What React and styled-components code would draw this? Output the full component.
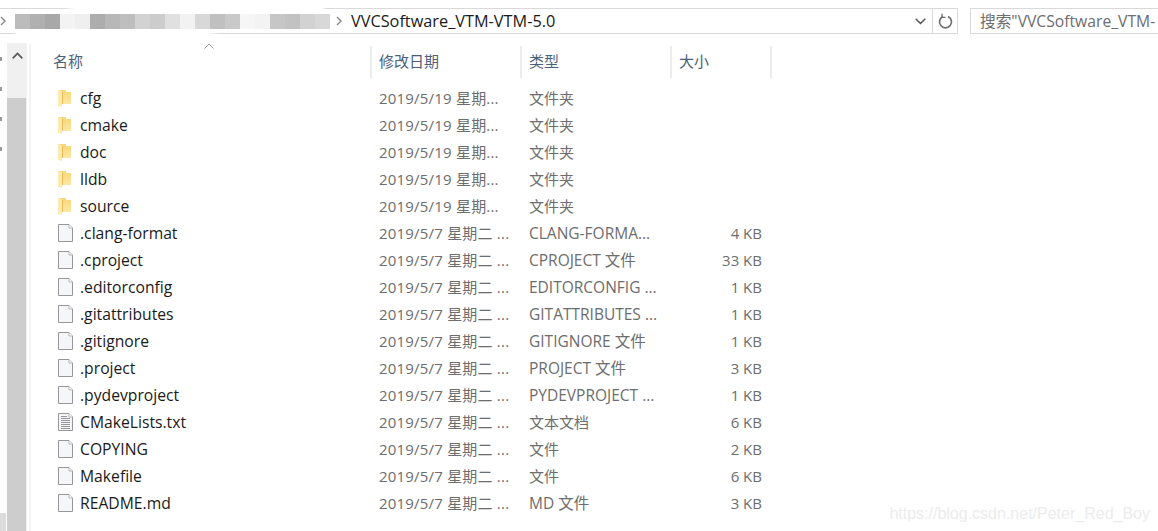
import React from 'react'
import styled, { createGlobalStyle } from 'styled-components'

const GlobalStyle = createGlobalStyle`
  html, body {
    margin: 0;
    padding: 0;
    background: #fff;
    overflow: hidden;
  }
`

const Window = styled.div`
  position: relative;
  width: 1158px;
  height: 531px;
  overflow: hidden;
  background: #fff;
  font-family: 'Open Sans', 'Noto Sans CJK SC', sans-serif;
  font-size: 15px;
`

const TopBar = styled.div`
  display: flex;
  height: 26px;
  padding-top: 8px;
`

const AddressBox = styled.div`
  position: relative;
  display: flex;
  flex: none;
  align-items: center;
  width: 958px;
  height: 26px;
  box-sizing: border-box;
  border: 1px solid #d9d9d9;
  border-left: 0;
`

const Smudge = styled.svg`
  position: absolute;
  left: 8px;
  top: -8px;
  width: 335px;
  height: 42px;
`

const Chevron = styled.svg`
  position: relative;
  flex: none;
  width: 6px;
  height: 10px;
  margin-left: ${(p) => p.$left}px;
`

const Mosaic = styled.div`
  position: relative;
  display: flex;
  margin-left: 9px;
`

const Tile = styled.div`
  width: 15px;
  height: 15px;
  background: ${(p) => p.$color};
`

const PathText = styled.span`
  position: relative;
  margin-left: 9px;
  color: #1a1a1a;
  font-size: 16.3px;
  white-space: nowrap;
`

const DropWrap = styled.div`
  margin-left: auto;
  display: flex;
  align-items: center;
  padding-right: 6px;
`

const RefreshWrap = styled.div`
  display: flex;
  align-items: center;
  justify-content: center;
  width: 24px;
  height: 100%;
  border-left: 1px solid #d9d9d9;
`

const SearchBox = styled.div`
  display: flex;
  flex: none;
  align-items: center;
  width: 188px;
  height: 26px;
  box-sizing: border-box;
  margin-left: 12px;
  padding-left: 9px;
  padding-bottom: 1px;
  border: 1px solid #d9d9d9;
  border-right: 0;
  color: #6d6d6d;
  font-size: 15.7px;
  white-space: nowrap;
  overflow: hidden;
`

const Main = styled.div`
  display: flex;
  height: 497px;
  padding-top: 9px;
`

const NavStrip = styled.div`
  display: flex;
  flex-direction: column;
  flex: none;
  width: 7px;
  padding-top: 14px;
  gap: 26px;
`

const NavDot = styled.div`
  width: 2px;
  height: 4px;
  background: #9a9a9a;
`

const NavBlock = styled.div`
  width: 6px;
  height: 27px;
  margin-top: auto;
  background: #dcdcdc;
`

const Scrollbar = styled.div`
  display: flex;
  flex-direction: column;
  flex: none;
  width: 20px;
  padding-bottom: 2px;
  background: #f0f0f0;
`

const ScrollUp = styled.div`
  display: flex;
  justify-content: center;
  height: 55px;
  padding-top: 9px;
  box-sizing: border-box;
`

const ScrollThumb = styled.div`
  flex: 1;
  margin-right: 1px;
  background: #cdcdcd;
`

const Pane = styled.div`
  flex: 1;
  margin-left: 2px;
  border-left: 2px solid #f4f4f4;
  padding-left: 21px;
`

const HeaderRow = styled.div`
  position: relative;
  display: flex;
  height: 32px;
  margin-top: 3px;
`

const SortArrow = styled.svg`
  position: absolute;
  left: 152px;
  top: -3px;
  width: 10px;
  height: 6px;
`

const HeaderCell = styled.div`
  box-sizing: border-box;
  width: ${(p) => p.$width}px;
  padding-left: ${(p) => p.$pad}px;
  line-height: 30px;
  color: #4c607a;
  font-size: 15px;
  border-right: 2px solid #ececec;
`

const Rows = styled.div`
  display: flex;
  flex-direction: column;
  margin-top: 6px;
`

const Row = styled.div`
  display: flex;
  align-items: center;
  height: 27px;
  color: #6d6d6d;
  font-size: 15px;
  white-space: nowrap;
`

const NameCell = styled.div`
  display: flex;
  align-items: center;
  width: 327px;
  padding-left: 6px;
  box-sizing: border-box;
  color: #1a1a1a;
  font-size: 15.7px;
`

const IconSlot = styled.div`
  display: flex;
  flex: none;
  width: 22px;
`

const DateCell = styled.div`
  width: 150px;
  letter-spacing: 0.2px;
`

const TypeCell = styled.div`
  width: 143px;
  font-size: ${(p) => (p.$latin ? '15.5px' : '15px')};
`

const SizeCell = styled.div`
  width: 90px;
  text-align: right;
`

const Watermark = styled.div`
  position: absolute;
  right: 8px;
  bottom: 8px;
  color: #ececec;
  font-family: 'Liberation Sans', sans-serif;
  font-size: 16px;
`

const mosaic = [
  '#bcbcbc', '#b0b0b0', '#a8a8a8', '#f3f3f3', '#efefef', '#adadad', '#b8b8b8', '#bebebe',
  '#d2d2d2', '#cccccc', '#e0e0e0', '#f2f2f2', '#d8d8d8', '#c0c0c0', '#c9c9c9', '#f6f6f6',
  '#f3f3f3', '#c6c6c6', '#c2c2c2', '#d2d2d2', '#d8d8d8',
]

const folderDate = '2019/5/19 星期...'
const fileDate = '2019/5/7 星期二 ...'

const entries = [
  { icon: 'folder', name: 'cfg', date: folderDate, type: '文件夹' },
  { icon: 'folder', name: 'cmake', date: folderDate, type: '文件夹' },
  { icon: 'folder', name: 'doc', date: folderDate, type: '文件夹' },
  { icon: 'folder', name: 'lldb', date: folderDate, type: '文件夹' },
  { icon: 'folder', name: 'source', date: folderDate, type: '文件夹' },
  { icon: 'file', name: '.clang-format', date: fileDate, type: 'CLANG-FORMA...', size: '4 KB' },
  { icon: 'file', name: '.cproject', date: fileDate, type: 'CPROJECT 文件', size: '33 KB' },
  { icon: 'file', name: '.editorconfig', date: fileDate, type: 'EDITORCONFIG ...', size: '1 KB' },
  { icon: 'file', name: '.gitattributes', date: fileDate, type: 'GITATTRIBUTES ...', size: '1 KB' },
  { icon: 'file', name: '.gitignore', date: fileDate, type: 'GITIGNORE 文件', size: '1 KB' },
  { icon: 'file', name: '.project', date: fileDate, type: 'PROJECT 文件', size: '3 KB' },
  { icon: 'file', name: '.pydevproject', date: fileDate, type: 'PYDEVPROJECT ...', size: '1 KB' },
  { icon: 'text', name: 'CMakeLists.txt', date: fileDate, type: '文本文档', size: '6 KB' },
  { icon: 'file', name: 'COPYING', date: fileDate, type: '文件', size: '2 KB' },
  { icon: 'file', name: 'Makefile', date: fileDate, type: '文件', size: '6 KB' },
  { icon: 'file', name: 'README.md', date: fileDate, type: 'MD 文件', size: '3 KB' },
]

function FolderIcon() {
  return (
    <svg width="13" height="18" viewBox="0 0 13 18">
      <defs>
        <linearGradient id="folderBody" x1="0" y1="0" x2="0" y2="1">
          <stop offset="0" stopColor="#f8d675" />
          <stop offset="1" stopColor="#fde7a6" />
        </linearGradient>
      </defs>
      <path d="M0 1H8V3H13V15H4V3Z" fill="url(#folderBody)" />
      <path d="M0 1L4 3V18L0 17Z" fill="#feeab0" />
      <path d="M4 3H5V15H4Z" fill="#e9bd55" />
    </svg>
  )
}

function FileIcon({ lines }) {
  return (
    <svg width="15" height="18" viewBox="0 0 15 18">
      <path d="M.5.5H11L14.5 4V17.5H.5Z" fill="#f4f6f9" stroke="#969696" />
      <path d="M11 .5V4H14.5" fill="#fff" stroke="#b5b5b5" />
      {lines && (
        <path d="M3 3.5H9M3 5.5H12M3 7.5H12M3 9.5H12M3 11.5H12M3 13.5H12M3 15.5H12" stroke="#969696" />
      )}
    </svg>
  )
}

function EntryIcon({ kind }) {
  if (kind === 'folder') return <FolderIcon />
  return <FileIcon lines={kind === 'text'} />
}

export default function App() {
  return (
    <Window>
      <GlobalStyle />
      <TopBar>
        <AddressBox>
          <Smudge viewBox="0 0 335 42">
            <path
              d="M6 22C6 12 40 8 90 6C170 1 300 0 326 10C335 14 330 24 300 28C240 30 190 32 170 37C110 42 20 42 8 34C5 30 5 26 6 22Z"
              fill="#fff"
            />
          </Smudge>
          <Chevron $left={0} viewBox="0 0 6 10">
            <path d="M1 1l4 4-4 4" fill="none" stroke="#8a8a8a" strokeWidth="1.4" />
          </Chevron>
          <Mosaic>
            {mosaic.map((color, i) => (
              <Tile key={i} $color={color} />
            ))}
          </Mosaic>
          <Chevron $left={6} viewBox="0 0 6 10">
            <path d="M1 1l4 4-4 4" fill="none" stroke="#8a8a8a" strokeWidth="1.4" />
          </Chevron>
          <PathText>VVCSoftware_VTM-VTM-5.0</PathText>
          <DropWrap>
            <svg width="11" height="7" viewBox="0 0 11 7">
              <path d="M.7.7l4.8 4.8L10.3.7" fill="none" stroke="#555" strokeWidth="1.5" />
            </svg>
          </DropWrap>
          <RefreshWrap>
            <svg width="15" height="16" viewBox="0 0 15 16">
              <path d="M5 3.4a6 6 0 1 0 5 0" fill="none" stroke="#707070" strokeWidth="1.7" />
              <path d="M4 .8v3.5h3.5" fill="none" stroke="#707070" strokeWidth="1.3" />
            </svg>
          </RefreshWrap>
        </AddressBox>
        <SearchBox>搜索"VVCSoftware_VTM-</SearchBox>
      </TopBar>
      <Main>
        <NavStrip>
          <NavDot />
          <NavDot />
          <NavDot />
          <NavDot />
          <NavBlock />
        </NavStrip>
        <Scrollbar>
          <ScrollUp>
            <svg width="11" height="7" viewBox="0 0 11 7">
              <path d="M.7 6.3L5.5 1.5l4.8 4.8" fill="none" stroke="#555" strokeWidth="1.7" />
            </svg>
          </ScrollUp>
          <ScrollThumb />
        </Scrollbar>
        <Pane>
          <HeaderRow>
            <SortArrow viewBox="0 0 10 6">
              <path d="M.5 5.5L5 1l4.5 4.5" fill="none" stroke="#999" />
            </SortArrow>
            <HeaderCell $width={320} $pad={1}>名称</HeaderCell>
            <HeaderCell $width={150} $pad={7}>修改日期</HeaderCell>
            <HeaderCell $width={150} $pad={7}>类型</HeaderCell>
            <HeaderCell $width={100} $pad={7}>大小</HeaderCell>
          </HeaderRow>
          <Rows>
            {entries.map((entry) => (
              <Row key={entry.name}>
                <NameCell>
                  <IconSlot>
                    <EntryIcon kind={entry.icon} />
                  </IconSlot>
                  {entry.name}
                </NameCell>
                <DateCell>{entry.date}</DateCell>
                <TypeCell $latin={/[A-Z]/.test(entry.type)}>{entry.type}</TypeCell>
                <SizeCell>{entry.size}</SizeCell>
              </Row>
            ))}
          </Rows>
        </Pane>
      </Main>
      <Watermark>https://blog.csdn.net/Peter_Red_Boy</Watermark>
    </Window>
  )
}
